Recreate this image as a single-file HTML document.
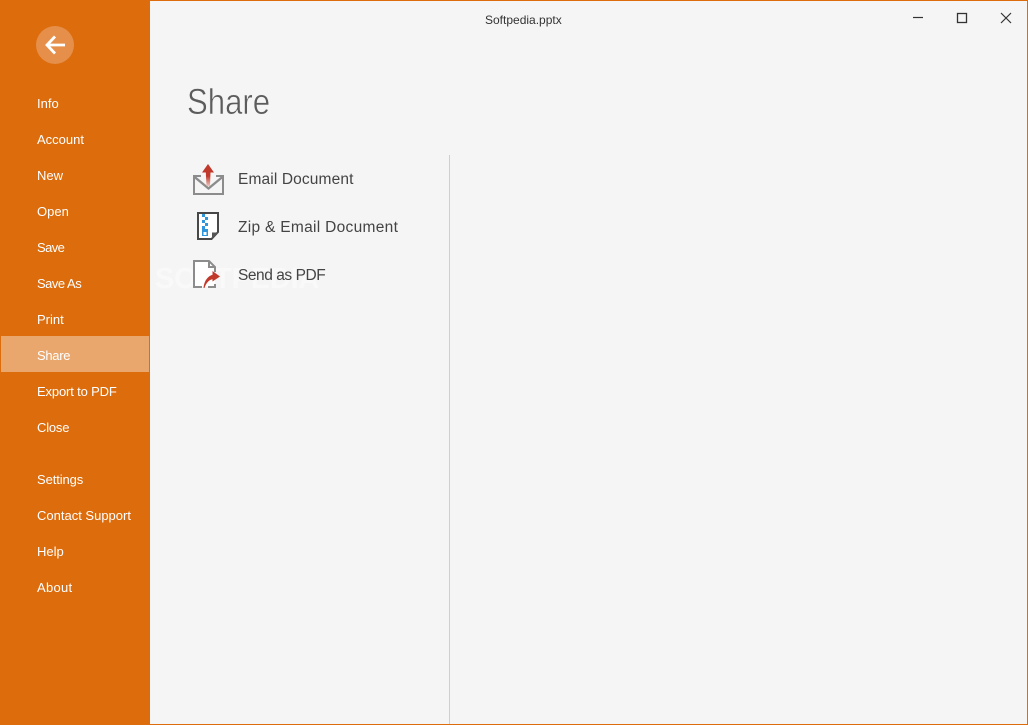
<!DOCTYPE html>
<html>
<head>
<meta charset="utf-8">
<style>
html,body{margin:0;padding:0;width:1028px;height:725px;overflow:hidden;background:#f5f5f5;font-family:"Liberation Sans",sans-serif;}
.abs{position:absolute;white-space:nowrap;}
#frame{position:absolute;left:0;top:0;width:1028px;height:725px;box-sizing:border-box;border:1px solid #dc6c0c;}
#side{position:absolute;left:0;top:0;width:150px;height:725px;background:#dc6c0c;}
#sel{position:absolute;left:1px;top:336px;width:148px;height:36px;background:#e9a76e;}
.m{position:absolute;left:37px;color:#fff;font-size:13px;line-height:16px;white-space:nowrap;}
.t{position:absolute;left:238px;color:#444;font-size:15.5px;line-height:20px;white-space:nowrap;}
</style>
</head>
<body>
<div id="side"></div>
<div id="frame"></div>
<div id="sel"></div>

<svg class="abs" style="left:36px;top:26px" width="38" height="38" viewBox="0 0 38 38">
<circle cx="19" cy="19" r="19" fill="#e58f4b"/>
<path d="M12 19H29" stroke="#fff" stroke-width="2.8" fill="none"/>
<path d="M19 10.5L11 19L19 27.5" stroke="#fff" stroke-width="2.8" fill="none"/>
</svg>

<div class="m" style="top:96px">Info</div>
<div class="m" style="top:132px">Account</div>
<div class="m" style="top:168px">New</div>
<div class="m" style="top:204px">Open</div>
<div class="m" style="top:240px;letter-spacing:-.6px">Save</div>
<div class="m" style="top:276px;letter-spacing:-.5px">Save As</div>
<div class="m" style="top:312px">Print</div>
<div class="m" style="top:348px;letter-spacing:-.3px">Share</div>
<div class="m" style="top:384px;letter-spacing:-.15px">Export to PDF</div>
<div class="m" style="top:420px;letter-spacing:-.2px">Close</div>
<div class="m" style="top:472px;letter-spacing:-.1px">Settings</div>
<div class="m" style="top:508px">Contact Support</div>
<div class="m" style="top:544px">Help</div>
<div class="m" style="top:580px;letter-spacing:.3px">About</div>

<div class="abs" style="left:485px;top:13px;font-size:12px;line-height:15px;color:#333;">Softpedia.pptx</div>

<svg class="abs" style="left:900px;top:0" width="128" height="40" viewBox="0 0 128 40">
<path d="M13 17.5H23" stroke="#333" stroke-width="1.2" fill="none"/>
<rect x="57.5" y="13.5" width="9" height="9" stroke="#333" stroke-width="1.3" fill="none"/>
<path d="M101 13L111 23M111 13L101 23" stroke="#333" stroke-width="1.2" fill="none"/>
</svg>

<div class="abs" style="left:187px;top:81px;font-size:36px;line-height:42px;color:#5c5c5c;-webkit-text-stroke:.55px #f5f5f5;transform:scaleX(.865);transform-origin:0 0;">Share</div>

<div class="abs" style="left:449px;top:155px;width:1px;height:569px;background:#cfcfcf;"></div>

<div class="abs" style="left:155px;top:262px;font-size:29px;line-height:34px;font-weight:bold;letter-spacing:-.2px;color:#f9f9f9;">SOFTPEDIA</div>

<svg class="abs" style="left:188px;top:160px" width="40" height="40" viewBox="0 0 40 40">
<defs><linearGradient id="g" x1="0" y1="0" x2="0" y2="1"><stop offset="0" stop-color="#c0392b"/><stop offset=".55" stop-color="#c0392b"/><stop offset="1" stop-color="#eec4bd"/></linearGradient></defs>
<path d="M13 16H6V34H35V16H28" stroke="#8c8c8c" stroke-width="2" fill="none"/>
<path d="M6 16.5L20.5 28.5L35 16.5" stroke="#8c8c8c" stroke-width="2.4" fill="none"/>
<path d="M20 4L26 12.5H22.5L22 26H18.5L17.8 12.5H14Z" fill="url(#g)"/>
</svg>

<svg class="abs" style="left:188px;top:208px" width="40" height="40" viewBox="0 0 40 40">
<path d="M10 5H30V24L23.5 31H10Z" stroke="#484848" stroke-width="2" fill="#fff"/>
<path d="M24 31V24.5H30Z" fill="#555"/>
<g fill="#2f96dc">
<rect x="14" y="6" width="3" height="3"/>
<rect x="17" y="9" width="3" height="3"/>
<rect x="14" y="12" width="3" height="3"/>
<rect x="17" y="15" width="3" height="3"/>
<rect x="14" y="18" width="3" height="3"/>
<rect x="14" y="21" width="6" height="7"/>
</g>
<rect x="15.5" y="24" width="3" height="3" fill="#fff"/>
</svg>

<svg class="abs" style="left:188px;top:256px" width="40" height="40" viewBox="0 0 40 40">
<path d="M6 5H21L27 11V31H6Z" fill="#fff"/>
<path d="M14 31H6V5H21L27 11V16M21 5V11H27M20 31H27V28" stroke="#8c8c8c" stroke-width="2" fill="none"/>
<path d="M15.5 32C16 25 20 19.5 25.5 18.5L25.5 23C21 23.5 18 27 16.5 32Z" fill="#c0392b"/>
<path d="M24.5 15L32 20.5L24.5 25.5Z" fill="#c0392b"/>
</svg>

<div class="t" style="top:170px;letter-spacing:.13px">Email Document</div>
<div class="t" style="top:218px;letter-spacing:.3px">Zip &amp; Email Document</div>
<div class="t" style="top:266px;letter-spacing:-.45px">Send as PDF</div>

</body>
</html>
